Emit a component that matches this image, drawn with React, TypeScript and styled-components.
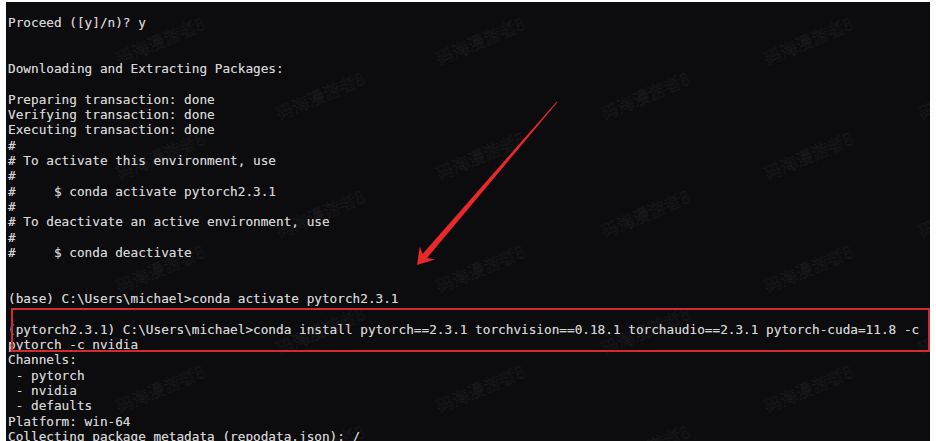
import React from "react";
import styled, { createGlobalStyle } from "styled-components";

const GlobalStyle = createGlobalStyle`
  html, body { margin: 0; padding: 0; background: #ffffff; }
  #root { width: 936px; height: 441px; }
`;

const Page = styled.div`
  position: relative;
  width: 936px;
  height: 441px;
  overflow: hidden;
  box-sizing: border-box;
  padding: 2px 0 0 6px;
  background: #ffffff;
`;

const Terminal = styled.div`
  width: 924px;
  height: 460px;
  box-sizing: border-box;
  padding: 13px 0 0 2px;
  background: #0c0c0f;
  color: #d4d4d4;
  font-family: "DejaVu Sans Mono", "Liberation Mono", monospace;
  font-size: 12.72px;
  line-height: 15.33px;
  text-shadow: 0 0 0.4px rgba(220, 220, 220, 0.6);
`;

const Line = styled.div`
  height: 15.33px;
  white-space: pre;
`;

const HighlightBox = styled.div`
  position: absolute;
  left: 11px;
  top: 308px;
  width: 919px;
  height: 44px;
  box-sizing: border-box;
  border: 2px solid #d22a30;
  pointer-events: none;
`;

const ArrowLayer = styled.svg`
  position: absolute;
  left: 0;
  top: 0;
  width: 936px;
  height: 441px;
  pointer-events: none;
`;

const Watermark = styled.div.attrs<{ $x: number; $y: number }>((p) => ({
  style: { left: `${p.$x}px`, top: `${p.$y}px` },
}))<{ $x: number; $y: number }>`
  position: absolute;
  transform: translate(-50%, -50%) rotate(-23deg);
  font-family: "Noto Sans CJK SC", "Noto Sans", sans-serif;
  font-size: 17px;
  font-weight: 400;
  white-space: nowrap;
  color: rgba(255, 255, 255, 0.02);
  -webkit-text-stroke: 0.5px rgba(200, 200, 200, 0.1);
  pointer-events: none;
`;

const lines = [
  "Proceed ([y]/n)? y",
  "",
  "",
  "Downloading and Extracting Packages:",
  "",
  "Preparing transaction: done",
  "Verifying transaction: done",
  "Executing transaction: done",
  "#",
  "# To activate this environment, use",
  "#",
  "#     $ conda activate pytorch2.3.1",
  "#",
  "# To deactivate an active environment, use",
  "#",
  "#     $ conda deactivate",
  "",
  "",
  "(base) C:\\Users\\michael>conda activate pytorch2.3.1",
  "",
  "(pytorch2.3.1) C:\\Users\\michael>conda install pytorch==2.3.1 torchvision==0.18.1 torchaudio==2.3.1 pytorch-cuda=11.8 -c",
  "pytorch -c nvidia",
  "Channels:",
  " - pytorch",
  " - nvidia",
  " - defaults",
  "Platform: win-64",
  "Collecting package metadata (repodata.json): /",
];

const marks: { x: number; y: number }[] = [];
[160, 480, 808].forEach((x) => [40, 155, 268, 388].forEach((y) => marks.push({ x, y })));
[320, 645, 962].forEach((x) => [95, 213, 330, 448].forEach((y) => marks.push({ x, y })));

export default function App() {
  return (
    <>
      <GlobalStyle />
      <Page>
        <Terminal>
          {lines.map((l, i) => (
            <Line key={i}>{l || " "}</Line>
          ))}
        </Terminal>
        {marks.map((m, i) => (
          <Watermark key={i} $x={m.x} $y={m.y}>
            码海漫游者8
          </Watermark>
        ))}
        <HighlightBox />
        <ArrowLayer viewBox="0 0 936 441">
          <polygon
            points="417,265 419.8,246.4 422.5,253.9 556.6,101.7 557.4,102.3 427.1,257.9 435,259.4"
            fill="#e8282a"
          />
        </ArrowLayer>
      </Page>
    </>
  );
}
